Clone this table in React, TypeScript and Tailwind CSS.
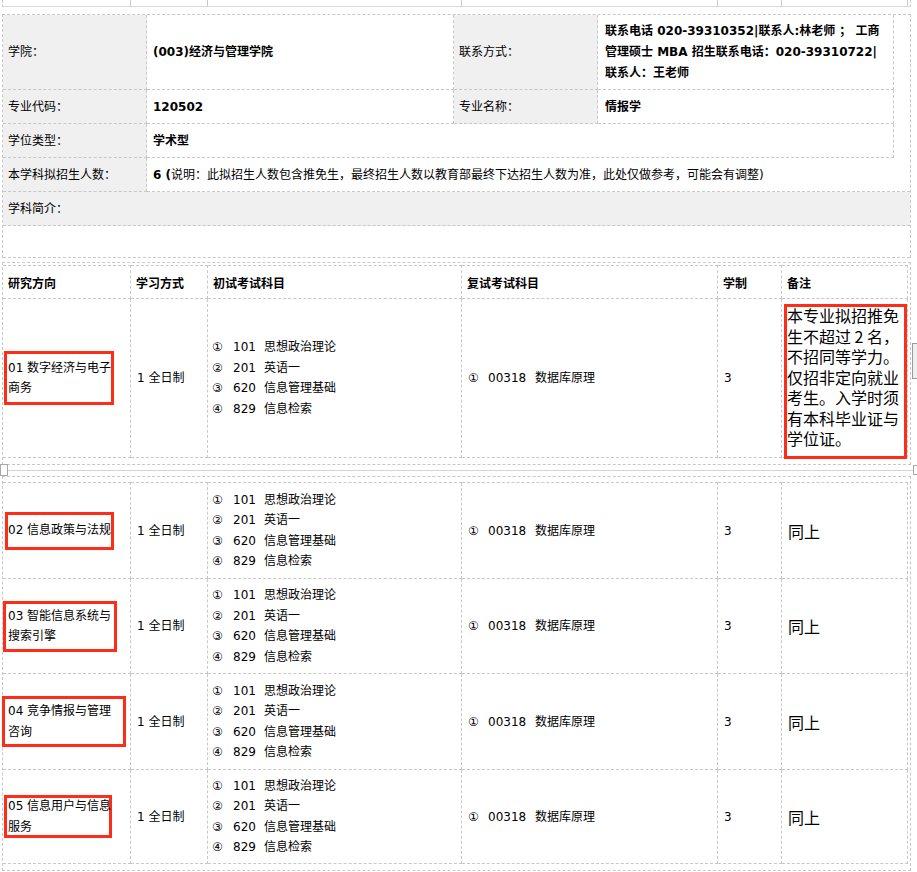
const F = "font-['DejaVu_Sans','Noto_Sans_CJK_SC',sans-serif]";
const CJK = "font-['Noto_Sans_CJK_SC',sans-serif]";
const B = 'border-dashed border-[#c8c8c8]';
const RED = 'border-[3px] border-[#ff2d17]';

const COLS = ['w-[128px]', 'w-[77px]', 'w-[254px]', 'w-[256px]', 'w-[64px]', 'w-[126px]'];

const EXAMS = [
  ['①', '101', '思想政治理论'],
  ['②', '201', '英语一'],
  ['③', '620', '信息管理基础'],
  ['④', '829', '信息检索'],
];

const DIRS = [
  { lines: ['01 数字经济与电子', '商务'], box: 'ml-[1px] w-[110px] h-[54px] pl-[1px]', rowH: 'h-[159px]' },
  { lines: ['02 信息政策与法规'], box: 'ml-[2px] w-[109px] h-[38px] pl-0', rowH: 'h-[97px]' },
  { lines: ['03 智能信息系统与', '搜索引擎'], box: 'ml-0 w-[114px] h-[51px] pl-[2px]', rowH: 'h-[95px]' },
  { lines: ['04 竞争情报与管理', '咨询'], box: '-ml-[1px] w-[124px] h-[51px] pl-[3px]', rowH: 'h-[96px]' },
  { lines: ['05 信息用户与信息', '服务'], box: 'ml-[1px] w-[108px] h-[43px] pl-[1px]', rowH: 'h-[94px]' },
];

const NOTE = ['本专业拟招推免', '生不超过 2 名，', '不招同等学力。', '仅招非定向就业', '考生。入学时须', '有本科毕业证与', '学位证。'];

function Label({ w, children }: { w: string; children: React.ReactNode }) {
  return (
    <div className={`flex items-center ${w} h-full shrink-0 bg-[#f0f0f0] pl-[5px] border-r border-b ${B}`}>
      {children}
    </div>
  );
}

function Value({ w, children, pl = 'pl-[6px]' }: { w: string; children?: React.ReactNode; pl?: string }) {
  return <div className={`flex items-center ${w} h-full shrink-0 ${pl} border-r border-b ${B}`}>{children}</div>;
}

function ExamCell() {
  return (
    <div className={`${COLS[2]} h-full flex flex-col justify-center pl-[4px] text-[12px] leading-[20.5px] border-r border-b ${B}`}>
      {EXAMS.map(([n, code, name]) => (
        <div key={code} className="flex whitespace-nowrap">
          <span className="w-[21px]">{n}</span>
          <span className="w-[31px]">{code}</span>
          <span>{name}</span>
        </div>
      ))}
    </div>
  );
}

function Row({ i, top }: { i: number; top?: boolean }) {
  const d = DIRS[i];
  const t = top ? 'border-t' : '';
  return (
    <div className={`flex ${d.rowH}`}>
      <div className={`${COLS[0]} h-full flex items-center border-r border-b ${t} ${B}`}>
        <div className={`relative z-10 flex flex-col justify-center ${d.box} ${RED} text-[12px] leading-[20.5px] whitespace-nowrap`}>
          {d.lines.map((l) => (
            <div key={l}>{l}</div>
          ))}
        </div>
      </div>
      <div className={`${COLS[1]} h-full flex items-center pl-[6px] text-[12px] border-r border-b ${t} ${B}`}>1 全日制</div>
      <div className={`flex ${t} ${B}`}>
        <ExamCell />
      </div>
      <div className={`${COLS[3]} h-full flex items-center pl-[6px] text-[12px] whitespace-nowrap border-r border-b ${t} ${B}`}>
        <span className="w-[20px]">①</span>
        <span className="w-[47px]">00318</span>
        <span>数据库原理</span>
      </div>
      <div className={`${COLS[4]} h-full flex items-center pl-[6px] text-[12px] border-r border-b ${t} ${B}`}>3</div>
      {i === 0 ? (
        <div className={`${COLS[5]} h-full border-r border-b ${t} ${B}`}>
          <div className={`relative z-10 ml-[2px] mt-[5px] w-[123px] h-[155px] ${RED} ${CJK} text-[16px] leading-[20.5px] whitespace-nowrap`}>
            <div className="-mt-[2px]">
              {NOTE.map((l) => (
                <div key={l}>{l}</div>
              ))}
            </div>
          </div>
        </div>
      ) : (
        <div className={`${COLS[5]} h-full flex items-center pl-[6px] ${CJK} text-[16px] border-r border-b ${t} ${B}`}>同上</div>
      )}
    </div>
  );
}

const HEADS = ['研究方向', '学习方式', '初试考试科目', '复试考试科目', '学制', '备注'];

export default function App() {
  return (
    <div className={`relative w-[917px] h-[872px] overflow-hidden bg-white text-black ${F}`}>
      {/* tail of the previous table */}
      <div className={`ml-[2px] w-[909px] h-[7px] border-l border-r ${B}`}>
        <div className="flex h-[7px] border-b border-[#d9d9d9]">
          {COLS.map((c) => (
            <div key={c} className={`${c} h-full border-r ${B}`} />
          ))}
        </div>
      </div>

      {/* basic info */}
      <div className={`mt-[7px] ml-[2px] w-[909px] border-t border-l border-r ${B} text-[12px]`}>
        <div className="flex h-[75px]">
          <Label w="w-[144px]">学院：</Label>
          <Value w="w-[307px]">
            <b>(003)经济与管理学院</b>
          </Value>
          <Label w="w-[144px]">联系方式：</Label>
          <Value w="w-[296px]" pl="pl-[7px]">
            <div className="font-bold leading-[21px] whitespace-nowrap">
              联系电话 020-39310352|联系人:林老师 ； 工商
              <br />
              管理硕士 MBA 招生联系电话：020-39310722|
              <br />
              联系人：王老师
            </div>
          </Value>
        </div>
        <div className="flex h-[34px]">
          <Label w="w-[144px]">专业代码：</Label>
          <Value w="w-[307px]">
            <b>120502</b>
          </Value>
          <Label w="w-[144px]">专业名称：</Label>
          <Value w="w-[296px]" pl="pl-[7px]">
            <b>情报学</b>
          </Value>
        </div>
        <div className="flex h-[34px]">
          <Label w="w-[144px]">学位类型：</Label>
          <Value w="w-[747px]">
            <b>学术型</b>
          </Value>
        </div>
        <div className="flex h-[34px]">
          <Label w="w-[144px]">本学科拟招生人数：</Label>
          <div className={`flex-1 flex items-center pl-[6px] whitespace-nowrap border-b ${B}`}>
            <b>6 (</b>说明：此拟招生人数包含推免生，最终招生人数以教育部最终下达招生人数为准，此处仅做参考，可能会有调整)
          </div>
        </div>
        <div className={`flex items-center h-[34px] bg-[#f0f0f0] pl-[5px] border-b ${B}`}>学科简介：</div>
        <div className={`h-[32px] border-b ${B}`} />
      </div>

      {/* directions, first block */}
      <div className={`mt-[4px] ml-[2px] w-[909px] pt-[2px] pr-[2px] pb-[6px] border ${B}`}>
        <div className="flex h-[34px] text-[12px] font-bold">
          {HEADS.map((h, i) => (
            <div key={h} className={`${COLS[i]} h-full flex items-center pl-[5px] pt-[3px] border-t border-r border-b ${B}`}>
              {h}
            </div>
          ))}
        </div>
        <Row i={0} />
      </div>

      <div className="mt-[5px] ml-[8px] w-[905px] h-px bg-[#d4d4d4]" />

      {/* directions, second block */}
      <div className={`mt-[5px] ml-[2px] w-[909px] pt-[5px] pr-[2px] pb-[6px] border ${B}`}>
        <Row i={1} top />
        <Row i={2} />
        <Row i={3} />
        <Row i={4} />
      </div>

      {/* editor handles */}
      <div className="absolute left-0 top-[464px] w-[8px] h-[12px] border border-[#a8a8a8] bg-white" />
      <div className="absolute left-[913px] top-[465px] w-[6px] h-[10px] border border-[#a8a8a8] bg-white" />
      <div className="absolute left-[912px] top-[343px] w-[8px] h-[36px] bg-[#f0f0f0] border-t border-b border-l border-[#9a9a9a]" />
    </div>
  );
}
